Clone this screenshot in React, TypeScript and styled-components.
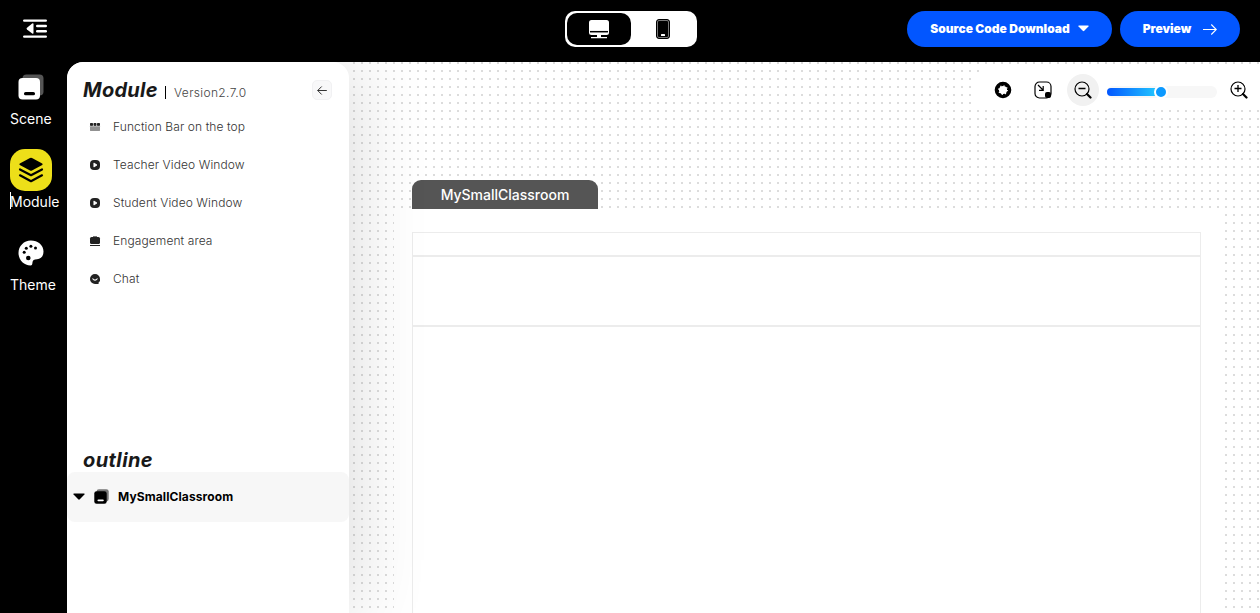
import React from 'react';
import styled, { createGlobalStyle } from 'styled-components';

const GlobalStyle = createGlobalStyle`
  * { box-sizing: border-box; }
  body { margin: 0; background: #000; overflow: hidden; }
  svg { display: block; flex: none; }
`;

const Page = styled.div`
  width: 1260px;
  height: 613px;
  display: flex;
  flex-direction: column;
  overflow: hidden;
  background: #000;
  font-family: Inter, 'Liberation Sans', sans-serif;
`;

const Header = styled.header`
  height: 62px;
  flex: none;
  display: grid;
  grid-template-columns: 565px 132px 1fr;
  align-items: start;
`;

const MenuButton = styled.div`
  padding: 19px 0 0 23px;
`;

const DeviceSwitch = styled.div`
  margin-top: 11px;
  height: 36px;
  padding: 2px;
  display: flex;
  background: #fff;
  border-radius: 10px;
`;

const Device = styled.div<{ $active?: boolean }>`
  width: 64px;
  height: 32px;
  display: flex;
  align-items: center;
  justify-content: center;
  border-radius: 10px;
  background: ${(p) => (p.$active ? '#000' : '#fff')};
`;

const Actions = styled.div`
  display: flex;
  gap: 8px;
  justify-content: flex-end;
  padding: 11px 20px 0 0;
`;

const ActionButton = styled.div<{ $width: number; $gap: number }>`
  width: ${(p) => p.$width}px;
  height: 36px;
  padding-bottom: 1px;
  display: flex;
  align-items: center;
  justify-content: center;
  gap: ${(p) => p.$gap}px;
  border-radius: 18px;
  background: #0256ff;
  color: #fff;
  font-size: 12px;
  font-weight: 900;
  white-space: nowrap;
`;

const Body = styled.div`
  flex: 1;
  min-height: 0;
  display: flex;
`;

const Nav = styled.nav`
  width: 67px;
  flex: none;
  padding: 4px 0 0 10px;
  display: flex;
  flex-direction: column;
`;

const NavItem = styled.div`
  height: 83px;
  color: #fff;
  font-size: 14px;
  line-height: 20px;
  white-space: nowrap;
`;

const NavIcon = styled.div<{ $active?: boolean }>`
  width: 42px;
  height: 42px;
  display: flex;
  align-items: center;
  justify-content: center;
  border-radius: 15px;
  background: ${(p) => (p.$active ? '#eddf19' : 'transparent')};
`;

const NavLabel = styled.div<{ $caret?: boolean }>`
  width: max-content;
  height: 17px;
  margin-top: 1px;
  box-shadow: ${(p) => (p.$caret ? 'inset 1px 0 #fff' : 'none')};
`;

const Workspace = styled.div`
  flex: 1;
  min-width: 0;
  display: flex;
  overflow: hidden;
  border-top-left-radius: 16px;
  background: #fff;
`;

const Panel = styled.aside`
  position: relative;
  z-index: 1;
  width: 282px;
  flex: none;
  display: flex;
  flex-direction: column;
  background: #fff;
  border-radius: 16px 16px 0 0;
  box-shadow: 0 0 80px rgba(0, 0, 0, 0.16);
`;

const PanelHeader = styled.div`
  height: 46px;
  padding: 0 18px 0 16px;
  display: flex;
  align-items: flex-start;
`;

const Title = styled.h2`
  margin: 0;
  color: #191919;
  font-size: 20px;
  line-height: 24px;
  font-weight: 700;
  font-style: italic;
  letter-spacing: 0.25px;
`;

const PanelTitle = styled(Title)`
  padding-top: 16px;
  width: 82px;
`;

const Version = styled.div`
  margin-top: 24px;
  height: 13px;
  padding-left: 8px;
  border-left: 1px solid #000;
  color: #444;
  font-size: 12px;
  font-weight: 300;
  line-height: 14px;
  letter-spacing: 0.35px;
`;

const BackButton = styled.div`
  width: 20px;
  height: 20px;
  margin: 18px -1px 0 auto;
  display: flex;
  align-items: center;
  justify-content: center;
  border: 1px solid #f1f1f3;
  border-radius: 5px;
  background: #f8f8f9;
`;

const ModuleList = styled.div`
  height: 340px;
`;

const ModuleItem = styled.div`
  height: 38px;
  padding-left: 22px;
  display: flex;
  align-items: center;
  gap: 12px;
  color: #333;
  font-size: 12px;
  font-weight: 300;
  letter-spacing: 0.1px;
`;

const ModuleLabel = styled.span`
  padding-bottom: 2px;
`;

const OutlineTitle = styled(Title)`
  padding-left: 16px;
  letter-spacing: 0.4px;
`;

const OutlineRow = styled.div`
  height: 50px;
  padding-left: 6px;
  display: flex;
  align-items: center;
  border-radius: 8px;
  background: #f7f7f7;
  color: #000;
  font-size: 12px;
  font-weight: 700;
  letter-spacing: 0.1px;
`;

const OutlineLabel = styled.span`
  padding-bottom: 2px;
`;

const OutlineIcon = styled.div`
  margin: 0 9px 1px 9px;
`;

const Canvas = styled.main`
  flex: 1;
  min-width: 0;
  display: flex;
  flex-direction: column;
  background-color: #fff;
  background-image: conic-gradient(from 90deg at 6px 6px, #dcdcdc 90deg, transparent 0);
  background-size: 8px 8px;
  background-position: -2px -6px;
`;

const Toolbar = styled.div`
  width: 284px;
  height: 40px;
  margin: 8px 0 0 auto;
  display: flex;
  align-items: center;
  padding-left: 18px;
  background: #fff;
  border-radius: 8px 0 0 8px;
`;

const ZoomOut = styled.div`
  width: 32px;
  height: 32px;
  margin: 0 8px 0 15px;
  display: flex;
  align-items: center;
  justify-content: center;
  border-radius: 50%;
  background: #f1f1f1;
`;

const Slider = styled.div`
  width: 110px;
  height: 12px;
  margin: 3px 13px 0 0;
  display: flex;
  align-items: center;
  border-radius: 6px;
  background: #f7f7f7;
`;

const SliderFill = styled.div`
  width: 54px;
  height: 8px;
  border-radius: 4px 0 0 4px;
  background: linear-gradient(90deg, #0256ff, #24cfff);
`;

const SliderThumb = styled.div`
  width: 14px;
  height: 14px;
  margin-left: -7px;
  border: 2px solid #fff;
  border-radius: 50%;
  background: #0c99ff;
`;

const PageTab = styled.div`
  width: 186px;
  height: 29px;
  margin: 70px 0 0 63px;
  flex: none;
  display: flex;
  align-items: center;
  justify-content: center;
  border-radius: 9px 9px 0 0;
  background: #555;
  color: #fff;
  font-size: 14px;
  font-weight: 500;
`;

const Board = styled.div`
  flex: 1;
  width: 825px;
  margin-left: 45px;
  padding: 23px 18px 0;
  display: flex;
  flex-direction: column;
  background: #fff;
`;

const Region = styled.div<{ $height?: number }>`
  border: 1px solid #ececec;
  ${(p) => (p.$height ? `height: ${p.$height}px; flex: none;` : 'flex: 1; border-bottom: 0;')}
`;

const MenuIcon = () => (
  <svg width="25" height="20" viewBox="0 0 25 20" fill="#fff">
    <rect x="0" y="0.4" width="24" height="2.4" rx="1.2" />
    <rect x="0" y="16.400" width="24" height="2.400" rx="1.200" />
    <path d="M4 8.700 9.200 4.600Q10.500 3.800 10.500 5.200v8.600q0 1.500-1.300.7L4 10.400Q3 9.500 4 8.700Z" />
    <rect x="13" y="5.800" width="11" height="2.400" rx="1.200" />
    <rect x="13" y="11" width="11" height="2.400" rx="1.200" />
  </svg>
);

const CardsIcon = ({ size, light }: { size: number; light?: boolean }) => (
  <svg width={size} height={size} viewBox="0 0 26 26">
    <rect x="4.5" y="0.5" width="21" height="21" rx="4" fill={light ? '#555' : '#777'} />
    <rect x="0.5" y="4" width="21.5" height="21.5" rx="4" fill={light ? '#fff' : '#000'} />
    <rect x="6" y="18" width="11" height="3.3" rx="1.6" fill={light ? '#000' : '#fff'} />
  </svg>
);

const LayersIcon = () => (
  <svg width="26" height="26" viewBox="0 0 26 26">
    <path d="M12 1.1q1-.5 2 0l10.2 5.5q1 .7 0 1.4L14 13.6q-1 .5-2 0L1.800 8q-1-.7 0-1.400Z" fill="#000" />
    <path d="m2 12.500 11 5.700 11-5.700M2 18.300l11 5.900 11-5.900" fill="none" stroke="#000" strokeWidth="2.200" strokeLinecap="round" strokeLinejoin="round" />
  </svg>
);

const PaletteIcon = () => (
  <svg width="26" height="26" viewBox="0 0 26 26">
    <path d="M12.800.5C19.800.5 25.500 5 25.500 11.500c0 5-2.800 7.500-6.500 7.700-3 .2-4.300.8-4.500 3-.1 2-.5 3.300-2 3.300C6 25.500.5 20 .5 13S6 .5 12.800.5Z" fill="#fff" />
    <circle cx="6.200" cy="12.300" r="1.500" />
    <circle cx="8.300" cy="8.200" r="1.500" />
    <circle cx="12.900" cy="6.300" r="1.500" />
    <circle cx="17.500" cy="8" r="1.500" />
    <circle cx="10.300" cy="18" r="2.300" />
  </svg>
);

const DesktopIcon = () => (
  <svg width="20" height="20" viewBox="0 0 20 20" fill="#fff">
    <rect x="0" y="1" width="20" height="15" rx="2.500" />
    <path d="M1 12.700h18" stroke="#000" strokeWidth="1.500" />
    <path d="M8 15h4v3H8ZM2 18h16v1.300H2Z" />
  </svg>
);

const PhoneIcon = () => (
  <svg width="14" height="20" viewBox="0 0 14 20">
    <rect x="0.500" y="0.500" width="13" height="19" rx="2.500" fill="#000" stroke="#000" />
    <rect x="1.500" y="1.500" width="11" height="17" rx="1.500" fill="none" stroke="#aaa" strokeWidth=".7" />
    <rect x="5" y="15" width="4" height="2" rx=".5" fill="#fff" />
  </svg>
);

const Caret = ({ color, width }: { color: string; width: number }) => (
  <svg width={width} height={width * 0.6} viewBox="0 0 12 7">
    <path d="M1 .5h10q1 .2.400 1L6.800 6.200q-.8.800-1.600 0L.6 1.500Q0 .7 1 .5Z" fill={color} />
  </svg>
);

const ArrowRight = () => (
  <svg width="14" height="12" viewBox="0 0 14 12" fill="none" stroke="#fff" strokeWidth="1.100">
    <path d="M0 6.500h13M8.300 1.500l5 5-5 5" />
  </svg>
);

const ArrowLeft = () => (
  <svg width="10" height="10" viewBox="0 0 10 10" fill="none" stroke="#333" strokeWidth="1">
    <path d="M.7 5.500H9.800M4.700 1.500l-4 4 4 4" />
  </svg>
);

const BarIcon = () => (
  <svg width="12" height="12" viewBox="0 0 12 12">
    <rect x="1" y="2" width="3" height="3" rx=".7" fill="#222" />
    <rect x="4.500" y="2" width="3" height="3" rx=".7" fill="#222" />
    <rect x="8" y="2" width="3" height="3" rx=".7" fill="#222" />
    <rect x="1" y="5" width="10" height="5" rx=".4" fill="#919191" />
    <path d="M1 5.200h10" stroke="#fff" strokeWidth=".4" />
  </svg>
);

const PlayIcon = () => (
  <svg width="12" height="12" viewBox="0 0 12 12">
    <rect x="1" y="1" width="10" height="10" rx="4" fill="#222" />
    <path d="M4.900 4v4L8 6Z" fill="#fff" stroke="#fff" strokeWidth=".8" strokeLinejoin="round" />
  </svg>
);

const AreaIcon = () => (
  <svg width="12" height="12" viewBox="0 0 12 12">
    <rect x="4" y="1" width="4" height="1" fill="#777" />
    <rect x="1" y="2" width="10" height="7" rx="1.500" fill="#222" />
    <rect x="1" y="10" width="10" height="1" fill="#222" />
  </svg>
);

const ChatIcon = () => (
  <svg width="12" height="12" viewBox="0 0 12 12">
    <path d="M6 1a5 5 0 0 1 5 5v2.200L9.800 9l-.3 2H6A5 5 0 0 1 6 1Z" fill="#222" />
    <path d="M3.500 5.500Q6 8.800 8.500 5.500" stroke="#fff" strokeWidth="1.100" fill="none" />
  </svg>
);

const GearIcon = () => (
  <svg width="18" height="18" viewBox="0 0 18 18">
    <circle cx="9" cy="9" r="6.200" fill="none" stroke="#000" strokeWidth="4.200" />
    <circle cx="9" cy="9" r="4.300" fill="none" stroke="#fff" strokeWidth="1.200" strokeDasharray="1.200 2.177" />
  </svg>
);

const FitIcon = () => (
  <svg width="18" height="18" viewBox="0 0 18 18" fill="none" stroke="#000">
    <rect x="1" y="1" width="16" height="16" rx="4.500" strokeWidth="1.200" />
    <path d="m4 4 5 5M9.200 5v4.300H5" strokeWidth="1.200" />
    <rect x="11" y="11" width="6" height="6" rx="2" fill="#000" stroke="none" />
  </svg>
);

const MagnifierIcon = ({ plus }: { plus?: boolean }) => (
  <svg width="18" height="18" viewBox="0 0 18 18" fill="none" stroke="#000">
    <circle cx="8" cy="8" r="7" strokeWidth="1.200" />
    <path d={plus ? 'M4.500 7.500h7M8 4v7' : 'M4.500 7.500h7'} strokeWidth="1.300" />
    <path d="m13 13 3.500 3.500" strokeWidth="2.200" strokeLinecap="round" />
  </svg>
);

const modules = [
  { label: 'Function Bar on the top', icon: <BarIcon /> },
  { label: 'Teacher Video Window', icon: <PlayIcon /> },
  { label: 'Student Video Window', icon: <PlayIcon /> },
  { label: 'Engagement area', icon: <AreaIcon /> },
  { label: 'Chat', icon: <ChatIcon /> },
];

const FitButton = styled.div`
  margin-left: 22px;
`;

export default function App() {
  return (
    <Page>
      <GlobalStyle />
      <Header>
        <MenuButton><MenuIcon /></MenuButton>
        <DeviceSwitch>
          <Device $active><DesktopIcon /></Device>
          <Device><PhoneIcon /></Device>
        </DeviceSwitch>
        <Actions>
          <ActionButton $width={205} $gap={8}>
            Source Code Download <Caret color="#fff" width={11} />
          </ActionButton>
          <ActionButton $width={120} $gap={12}>
            Preview <ArrowRight />
          </ActionButton>
        </Actions>
      </Header>
      <Body>
        <Nav>
          <NavItem>
            <NavIcon><CardsIcon size={26} light /></NavIcon>
            <NavLabel>Scene</NavLabel>
          </NavItem>
          <NavItem>
            <NavIcon $active><LayersIcon /></NavIcon>
            <NavLabel $caret>Module</NavLabel>
          </NavItem>
          <NavItem>
            <NavIcon><PaletteIcon /></NavIcon>
            <NavLabel>Theme</NavLabel>
          </NavItem>
        </Nav>
        <Workspace>
          <Panel>
            <PanelHeader>
              <PanelTitle>Module</PanelTitle>
              <Version>Version2.7.0</Version>
              <BackButton><ArrowLeft /></BackButton>
            </PanelHeader>
            <ModuleList>
              {modules.map((m) => (
                <ModuleItem key={m.label}>
                  {m.icon}
                  <ModuleLabel>{m.label}</ModuleLabel>
                </ModuleItem>
              ))}
            </ModuleList>
            <OutlineTitle>outline</OutlineTitle>
            <OutlineRow>
              <Caret color="#000" width={12} />
              <OutlineIcon><CardsIcon size={15} /></OutlineIcon>
              <OutlineLabel>MySmallClassroom</OutlineLabel>
            </OutlineRow>
          </Panel>
          <Canvas>
            <Toolbar>
              <GearIcon />
              <FitButton><FitIcon /></FitButton>
              <ZoomOut><MagnifierIcon /></ZoomOut>
              <Slider><SliderFill /><SliderThumb /></Slider>
              <MagnifierIcon plus />
            </Toolbar>
            <PageTab>MySmallClassroom</PageTab>
            <Board>
              <Region $height={24} />
              <Region $height={70} />
              <Region />
            </Board>
          </Canvas>
        </Workspace>
      </Body>
    </Page>
  );
}
